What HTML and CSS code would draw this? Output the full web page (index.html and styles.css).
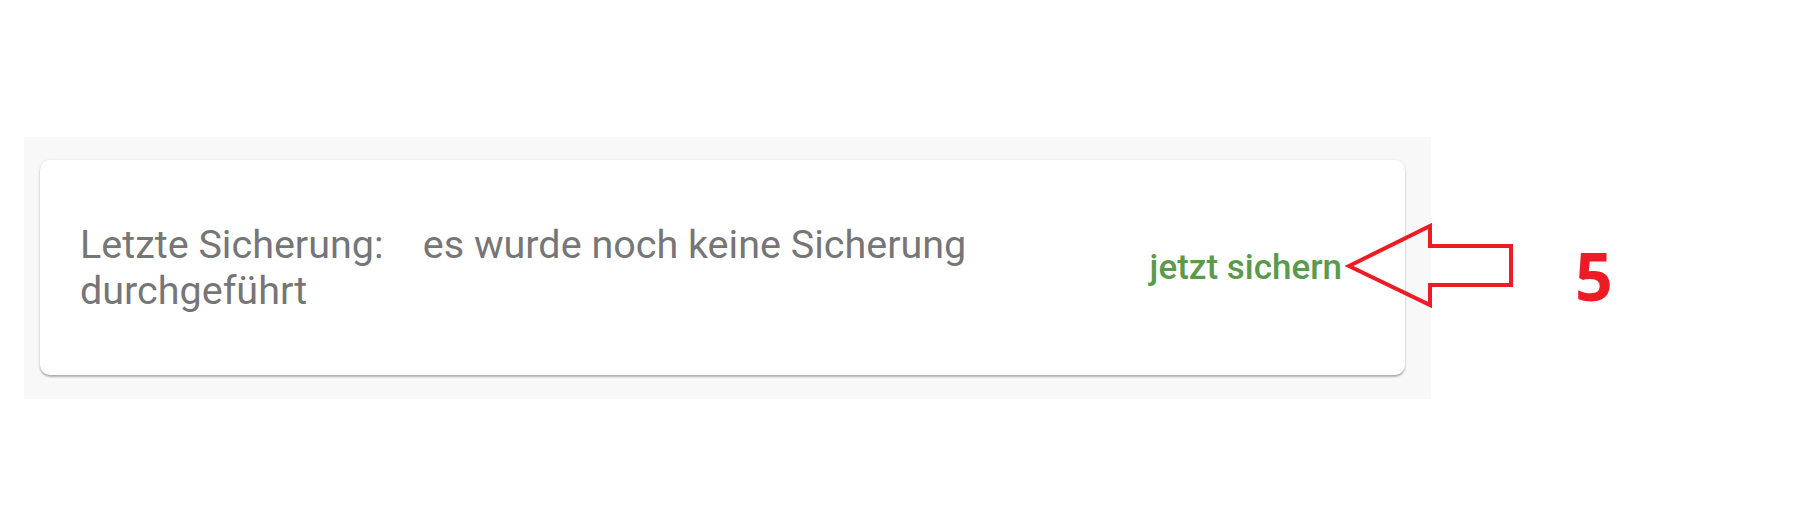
FILE: index.html
```html
<!DOCTYPE html>
<html lang="de">
<head>
<meta charset="utf-8">
<title>Sicherung</title>
<link rel="stylesheet" href="styles.css">
</head>
<body>
<main class="page">
  <section class="panel">
    <div class="card">
      <p class="status">Letzte Sicherung:&nbsp;&nbsp;&nbsp; es wurde noch keine Sicherung durchgeführt</p>
      <button class="save-btn" type="button">jetzt sichern</button>
    </div>
  </section>
</main>
<svg class="annot-arrow" width="180" height="95" viewBox="0 0 180 95" aria-hidden="true">
  <polygon points="9,46 90,6 90,26 171,26 171,65 90,65 90,85" fill="none" stroke="#ed1c24" stroke-width="4" stroke-linejoin="miter"/>
</svg>
<div class="annot-num">5</div>
</body>
</html>
```

FILE: styles.css
```css
html, body {
  margin: 0;
  padding: 0;
  background: #ffffff;
}

body {
  width: 1795px;
  height: 515px;
  position: relative;
  overflow: hidden;
  font-family: Roboto, "Noto Sans", "Liberation Sans", sans-serif;
}

.page {
  padding: 137px 0 0 24px;
}

.panel {
  width: 1407px;
  box-sizing: border-box;
  background: #f8f8f8;
  padding: 23px 26px 24px 16px;
}

.card {
  height: 215px;
  box-sizing: border-box;
  background: #ffffff;
  border-radius: 10px;
  box-shadow: 0 2px 2px rgba(0, 0, 0, 0.28), 0 0 3px rgba(0, 0, 0, 0.08);
  display: flex;
  align-items: center;
  padding: 0 43px 0 40px;
}

.status {
  flex: 1;
  margin: 0;
  max-width: 1000px;
  font-size: 39.5px;
  line-height: 46px;
  color: #767676;
  font-weight: 400;
}

.save-btn {
  margin-left: auto;
  border: 0;
  background: transparent;
  padding: 8px 20px;
  font-family: Roboto, "Noto Sans", sans-serif;
  font-size: 35px;
  font-weight: 500;
  color: #5b9a4b;
  cursor: pointer;
}

.annot-arrow {
  position: absolute;
  left: 1340px;
  top: 220px;
}

.annot-num {
  position: absolute;
  left: 1575px;
  top: 242px;
  font-family: "Open Sans", "Liberation Sans", sans-serif;
  font-weight: 700;
  font-size: 66px;
  line-height: 66px;
  color: #ed1c24;
}
```
